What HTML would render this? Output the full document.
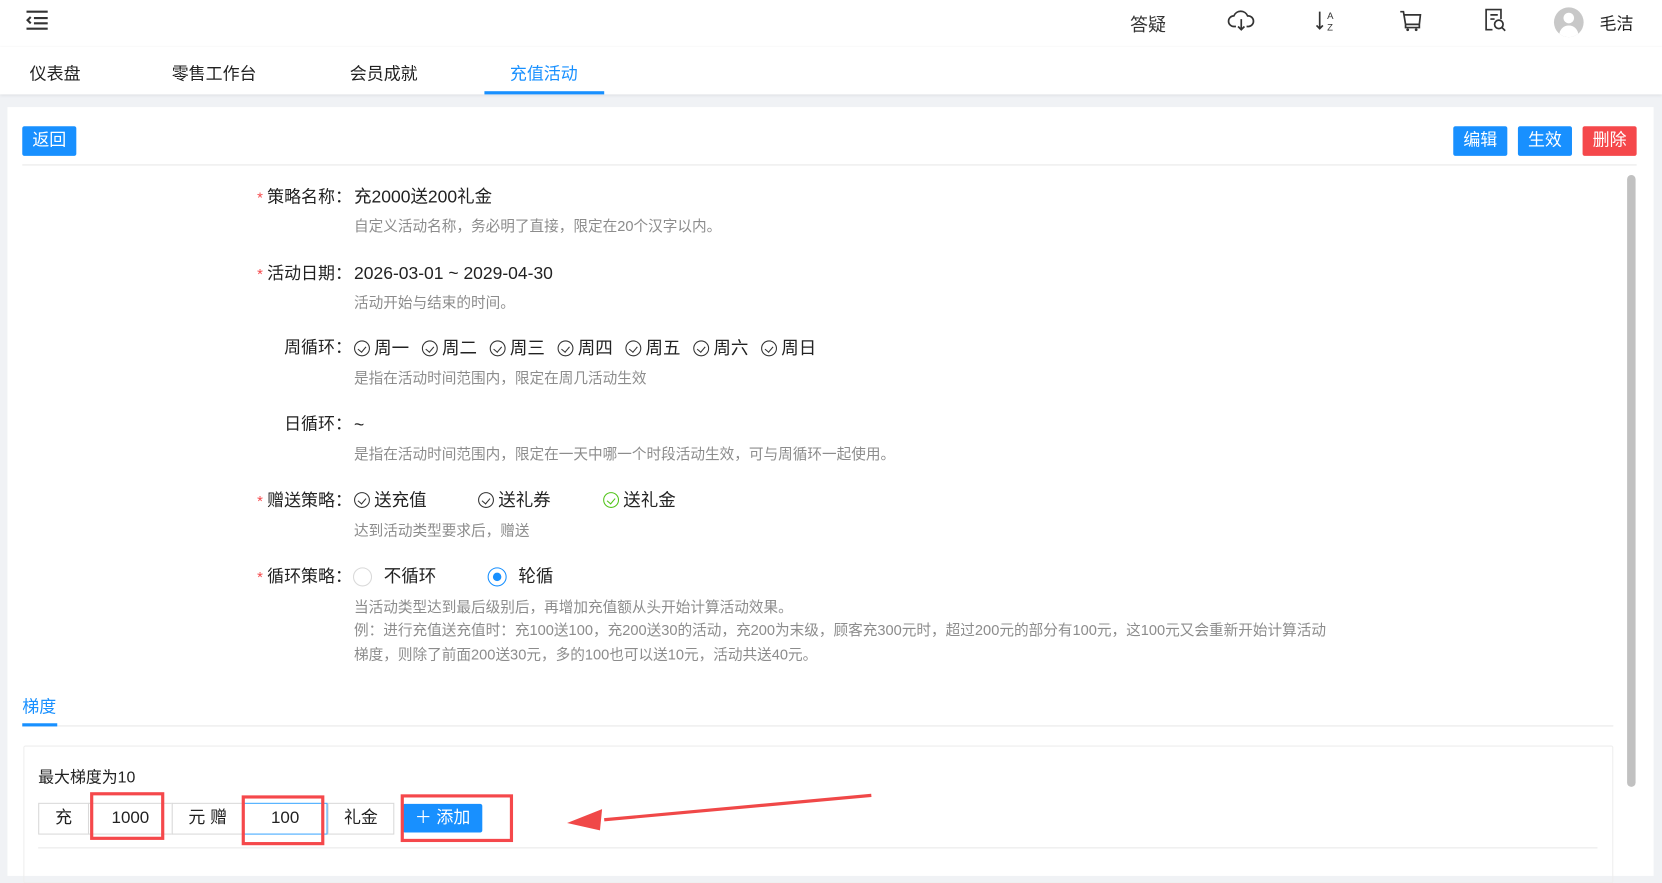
<!DOCTYPE html>
<html><head><meta charset="utf-8"><style>
*{margin:0;padding:0;box-sizing:border-box}
html,body{width:1662px;height:876px;overflow:hidden;background:#f0f2f5}
body{font-family:"Liberation Sans","Noto Sans CJK SC",sans-serif;color:#222}
#w{position:absolute;left:0;top:0;width:1568px;height:826px;transform:scale(1.06,1.0605);transform-origin:0 0;background:#f0f2f5}
.a{position:absolute;white-space:nowrap}
.btn{position:absolute;height:28px;width:51px;color:#fff;font-size:16px;line-height:28px;text-align:center;border-radius:2px;background:#1890ff}
.lb{position:absolute;right:1236px;font-size:16px;line-height:20px;white-space:nowrap}
.lb b{color:#f5484b;font-weight:normal;margin-right:4px;font-size:14px}
.v{position:absolute;left:334px;font-size:16.5px;line-height:20px;white-space:nowrap}
.h{position:absolute;left:334px;font-size:13.8px;color:#8c8c8c;line-height:18px;white-space:nowrap}
.ck{display:inline-block;width:15px;height:15px;border:1.3px solid #333;border-radius:50%;vertical-align:-2px;position:relative;margin-right:4px}
.ck:after{content:"";position:absolute;left:3.5px;top:2.5px;width:4px;height:6px;border:solid #333;border-width:0 1.3px 1.3px 0;transform:rotate(40deg)}
.ck.g{border-color:#52c41a}.ck.g:after{border-color:#52c41a}
.wk span.i{margin-right:12px}
.cell{position:absolute;top:757px;height:30px;border:1px solid #d9d9d9;font-size:16px;line-height:28px;text-align:center;background:#fff}
.rb{position:absolute;border:3px solid #f5484b}
</style></head><body><div id="w">
<div class="a" style="left:0;top:0;width:1568px;height:44px;background:#fff;box-shadow:0 1px 3px rgba(0,0,0,.06)"></div>
<svg class="a" style="left:23px;top:9px" width="24" height="20" viewBox="0 0 24 20"><g stroke="#333" stroke-width="2" fill="none"><path d="M2 2h20M9 8h13M9 13h13M2 18h20M6 7l-3 3 3 3"/></g></svg>
<div class="a" style="left:1066px;top:9px;font-size:17px;color:#333">答疑</div>
<svg class="a" style="left:1158px;top:8px" width="26" height="24" viewBox="0 0 26 24"><path d="M8 17H6a5 5 0 0 1 0-10 7 7 0 0 1 13 0 5 5 0 0 1 1 10h-2M13 10v10M10 17l3 3 3-3" stroke="#333" stroke-width="1.6" fill="none"/></svg>
<svg class="a" style="left:1240px;top:8px" width="24" height="24" viewBox="0 0 24 24"><path d="M5 3v16M2 16l3 3 3-3" stroke="#333" stroke-width="1.6" fill="none"/><text x="12" y="10" font-size="9" font-family="Liberation Sans" fill="#333">A</text><text x="12" y="21" font-size="9" font-family="Liberation Sans" fill="#333">Z</text></svg>
<svg class="a" style="left:1319px;top:8px" width="24" height="24" viewBox="0 0 24 24"><path d="M2 3h3l2 12h13l1-9H6M7 15v3h13v-3" stroke="#333" stroke-width="1.6" fill="none"/><circle cx="9" cy="20" r="1.3" fill="#333"/><circle cx="17" cy="20" r="1.3" fill="#333"/></svg>
<svg class="a" style="left:1399px;top:6px" width="24" height="26" viewBox="0 0 24 26"><path d="M9 22H3V3h14v9M7 8h7M7 12h4" stroke="#333" stroke-width="1.6" fill="none"/><circle cx="15" cy="17" r="4" stroke="#333" stroke-width="1.6" fill="none"/><path d="M18 20l3 3" stroke="#333" stroke-width="1.6"/></svg>
<div class="a" style="left:1466px;top:7px;width:28px;height:28px;border-radius:50%;background:#c8c8c8;overflow:hidden"><div class="a" style="left:9px;top:5px;width:10px;height:10px;border-radius:50%;background:#fff"></div><div class="a" style="left:5px;top:17px;width:18px;height:14px;border-radius:9px 9px 0 0;background:#fff"></div></div>
<div class="a" style="left:1509px;top:9px;font-size:16px">毛洁</div>
<div class="a" style="left:0;top:44px;width:1568px;height:45px;background:#fff;box-shadow:0 1px 3px rgba(0,0,0,.08)"></div>
<div class="a" style="left:28px;top:56px;font-size:16px">仪表盘</div>
<div class="a" style="left:162px;top:56px;font-size:16px">零售工作台</div>
<div class="a" style="left:330px;top:56px;font-size:16px">会员成就</div>
<div class="a" style="left:481px;top:56px;font-size:16px;color:#1890ff">充值活动</div>
<div class="a" style="left:457px;top:86px;width:113px;height:3px;background:#1890ff"></div>
<div class="a" style="left:7px;top:101px;width:1553px;height:725px;background:#fff"></div>
<div class="btn" style="left:21px;top:119px">返回</div>
<div class="btn" style="left:1371px;top:119px">编辑</div>
<div class="btn" style="left:1432px;top:119px">生效</div>
<div class="btn" style="left:1493px;top:119px;background:#f5484b">删除</div>
<div class="a" style="left:21px;top:155px;width:1523px;height:1px;background:#e8e8e8"></div>
<div class="a" style="left:1535px;top:165px;width:8px;height:577px;border-radius:4px;background:#c1c1c1"></div>
<div class="lb" style="top:176px"><b>*</b>策略名称：</div><div class="v" style="top:176px">充2000送200礼金</div><div class="h" style="top:205px">自定义活动名称，务必明了直接，限定在20个汉字以内。</div>
<div class="lb" style="top:248px"><b>*</b>活动日期：</div><div class="v" style="top:248px">2026-03-01 ~ 2029-04-30</div><div class="h" style="top:277px">活动开始与结束的时间。</div>
<div class="lb" style="top:319px">周循环：</div><div class="v wk" style="top:319px"><span class="ck"></span><span class="i">周一</span><span class="ck"></span><span class="i">周二</span><span class="ck"></span><span class="i">周三</span><span class="ck"></span><span class="i">周四</span><span class="ck"></span><span class="i">周五</span><span class="ck"></span><span class="i">周六</span><span class="ck"></span>周日</div><div class="h" style="top:348px">是指在活动时间范围内，限定在周几活动生效</div>
<div class="lb" style="top:391px">日循环：</div><div class="v" style="top:391px">~</div><div class="h" style="top:420px">是指在活动时间范围内，限定在一天中哪一个时段活动生效，可与周循环一起使用。</div>
<div class="lb" style="top:462px"><b>*</b>赠送策略：</div>
<div class="v" style="top:462px"><span class="ck"></span>送充值</div>
<div class="v" style="top:462px;left:451px"><span class="ck"></span>送礼券</div>
<div class="v" style="top:462px;left:569px"><span class="ck g"></span>送礼金</div>
<div class="h" style="top:492px">达到活动类型要求后，赠送</div>
<div class="lb" style="top:534px"><b>*</b>循环策略：</div>
<div class="a" style="left:333px;top:535px;width:18px;height:18px;border:1px solid #d9d9d9;border-radius:50%"></div>
<div class="v" style="top:534px;left:362px">不循环</div>
<div class="a" style="left:460px;top:535px;width:18px;height:18px;border:1px solid #1890ff;border-radius:50%"><div class="a" style="left:4px;top:4px;width:8px;height:8px;border-radius:50%;background:#1890ff"></div></div>
<div class="v" style="top:534px;left:489px">轮循</div>
<div class="h" style="top:564px">当活动类型达到最后级别后，再增加充值额从头开始计算活动效果。</div>
<div class="h" style="top:586px">例：进行充值送充值时：充100送100，充200送30的活动，充200为末级，顾客充300元时，超过200元的部分有100元，这100元又会重新开始计算活动</div>
<div class="h" style="top:609px">梯度，则除了前面200送30元，多的100也可以送10元，活动共送40元。</div>
<div class="a" style="left:21px;top:653px;font-size:16px;color:#1890ff">梯度</div>
<div class="a" style="left:21px;top:684px;width:1501px;height:1px;background:#e8e8e8"></div>
<div class="a" style="left:21px;top:682px;width:33px;height:3px;background:#1890ff"></div>
<div class="a" style="left:22px;top:703px;width:1500px;height:130px;border:1px solid #eee;border-radius:2px"></div>
<div class="a" style="left:36px;top:722px;font-size:15px">最大梯度为10</div>
<div class="cell" style="left:36px;width:48px">充</div>
<div class="cell" style="left:83px;width:80px">1000</div>
<div class="cell" style="left:162px;width:68px">元 赠</div>
<div class="cell" style="left:229px;width:80px;border-color:#40a9ff">100</div>
<div class="cell" style="left:309px;width:63px">礼金</div>
<div class="a" style="left:380px;top:758px;width:75px;height:27px;background:#1890ff;color:#fff;font-size:16px;line-height:27px;border-radius:2px;text-align:center">＋ 添加</div>
<div class="a" style="left:36px;top:799px;width:1471px;height:1px;background:#e8e8e8"></div>
<div class="rb" style="left:85px;top:747px;width:70px;height:45px"></div>
<div class="rb" style="left:228px;top:750px;width:78px;height:47px"></div>
<div class="rb" style="left:378px;top:749px;width:106px;height:45px"></div>
<svg class="a" style="left:530px;top:745px" width="300" height="40" viewBox="0 0 300 40"><path d="M292 5L40 28" stroke="#f04848" stroke-width="3"/><path d="M5 31L38 18 36 38Z" fill="#f04848"/></svg>
</div></body></html>
